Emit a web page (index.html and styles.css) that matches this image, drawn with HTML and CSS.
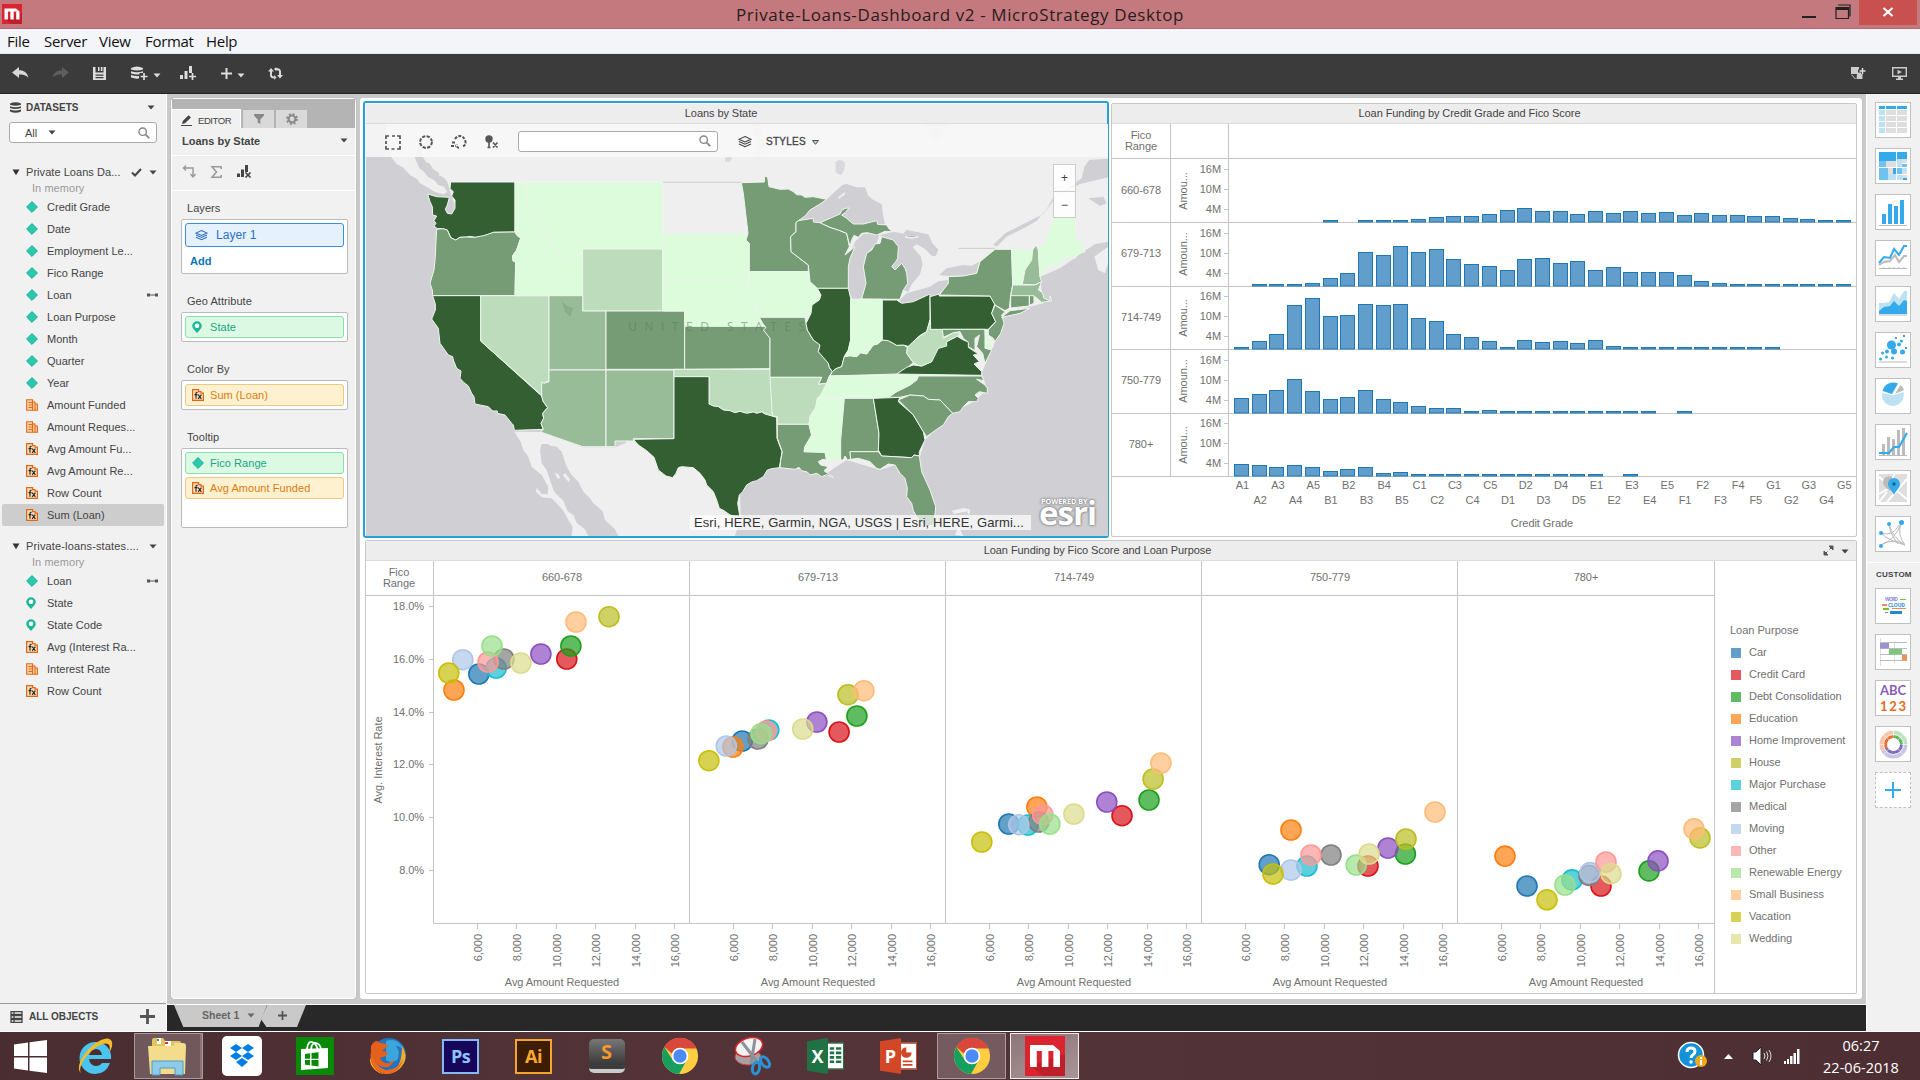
FILE: index.html
```html
<!DOCTYPE html>
<html lang="en">
<head>
<meta charset="utf-8">
<title>Private-Loans-Dashboard v2 - MicroStrategy Desktop</title>
<link rel="stylesheet" href="styles.css">
</head>
<body>
<svg class="defs" width="0" height="0" aria-hidden="true">
  <symbol id="attr" viewBox="0 0 12 12"><path d="M6 .6 11.4 6 6 11.4.6 6z" fill="#2cc8ae" stroke="#14b095"/></symbol>
  <symbol id="metric" viewBox="0 0 12 12"><path d="M.7.7h6.6v2h2.2v2.2h1.9v6.4H.7z" fill="#fcd2a4"/><path d="M.7.7h5.8v10.6H.7zM6.5 3H9v8.3M9 5h2.4v6.3H6.5M2.5 3.5h4M2.5 6h4M2.5 8.5h4" fill="none" stroke="#e0671a" stroke-width="1.1"/></symbol>
  <symbol id="fx" viewBox="0 0 12 12"><path d="M.6.6h6v2h2.4v1.6h2.4v7.2H.6z" fill="#fcdcb4" stroke="#e0671a" stroke-width="1.2"/><path d="M5.6 3.4Q4 3 4 4.6V9.8M2.5 5.6h3M6.2 5.6 9.4 9.8M9.4 5.6 6.2 9.8" fill="none" stroke="#222" stroke-width="1.1"/></symbol>
  <symbol id="geo" viewBox="0 0 12 12"><path d="M5 .3A4.8 4.8 0 0 1 9.8 5C9.8 7.600 7 9.500 5 12 3 9.500.2 7.600.2 5A4.800 4.800 0 0 1 5 .3z" fill="#1cb69c"/><circle cx="5" cy="4.700" r="2.300" fill="#fff"/></symbol>
  <symbol id="caret" viewBox="0 0 8 5"><path d="M.5.5h7L4 4.500z" fill="currentColor"/></symbol>
  <symbol id="fold" viewBox="0 0 8 8"><path d="M0 .5h8L4 7z" fill="#333"/></symbol>
  <symbol id="link" viewBox="0 0 11 4"><path d="M0 .500h3v3H0zM8 .500h3v3H8zM3 1.500h5v1H3z" fill="#555"/></symbol>
  <symbol id="lens" viewBox="0 0 12 12"><circle cx="4.700" cy="4.700" r="3.700" fill="none" stroke="#888" stroke-width="1.400"/><path d="m7.600 7.600 3.600 3.600" stroke="#888" stroke-width="1.900"/></symbol>
  <symbol id="layers" viewBox="0 0 14 12"><path d="M7 .600 13 3.300 7 6 1 3.300zM1 5.500l6 2.700 6-2.700M1 8l6 2.700L13 8" fill="none" stroke="currentColor" stroke-width="1.100"/></symbol>
  <symbol id="mstr" viewBox="0 0 20 20"><path d="M0 0h20v20H0z" fill="#da2430"/><path d="M20 9v11H9L3 15z" fill="#bf1f29"/><path d="M2.500 4.500H14l3.500 3V15.500h-3.300V7.500H11.700v8H8.400v-8H5.900v8H2.500z" fill="#fff"/></symbol>
  <symbol id="chrome" viewBox="0 0 40 40"><circle cx="20" cy="20" r="19" fill="#ffcd40"/><path d="M3.500 10.500A19 19 0 0 1 37.300 12H20a8.500 8.500 0 0 0-8 6z" fill="#d9483b"/><path d="M3.500 10.500A19 19 0 0 0 19 39l7.500-13.500a9 9 0 0 1-14-1z" fill="#17a05d"/><circle cx="20" cy="20" r="8.800" fill="#fff"/><circle cx="20" cy="20" r="7" fill="#4c8bf5"/></symbol>
</svg>

<header class="titlebar">
  <svg class="app-logo" width="20" height="20"><use href="#mstr"/></svg>
  <h1 class="win-title">Private-Loans-Dashboard v2 - MicroStrategy Desktop</h1>
  <div class="win-buttons">
    <svg width="76" height="25" viewBox="0 0 76 25"><path d="M1 16h14v2H1z" fill="#222"/><path d="M35 7.500h12.500v11H35zM35 9.500h12.500M37 5h12v11.500" fill="none" stroke="#222" stroke-width="1.200"/><path d="M35 7.200h12.500v2.200H35z" fill="#222"/></svg>
    <span class="close"><svg width="12" height="10" viewBox="0 0 12 10"><path d="m1.500 1 9 8m0-8-9 8" stroke="#fff" stroke-width="2.200"/></svg></span>
  </div>
</header>
<nav class="menubar"><span class="m-file">File</span><span class="m-server">Server</span><span class="m-view">View</span><span class="m-format">Format</span><span class="m-help">Help</span></nav>

<div class="toolbar">
  <svg class="t-undo" width="17" height="12" viewBox="0 0 17 12"><path d="M0 5.500 7 0v3.200c5 0 8 2 9.500 7.300C13.500 8 11 7.600 7 7.600V11z" fill="#d8d8d8"/></svg>
  <svg class="t-redo" width="17" height="12" viewBox="0 0 17 12"><path d="M17 5.500 10 0v3.200C5 3.200 2 5.200.500 10.500 3.500 8 6 7.600 10 7.600V11z" fill="#5e5e5e"/></svg>
  <svg class="t-save" width="13" height="13" viewBox="0 0 13 13"><path d="M0 0h2.500v5.500h8V0H13v13H0zM5 0h1.500v4H5zM7.800 0H9.500v4H7.800zM2.500 7.500v1.200h8V7.500zm0 2.500v1.200h8V10z" fill="#ddd" fill-rule="evenodd"/></svg>
  <svg class="t-db" width="17" height="14" viewBox="0 0 17 14"><path d="M0 2q6-3 12 0v1.500q-6 2-12 0zM0 5.200q6 2.300 12 0V7H8.500v1.400Q4 8.800 0 7.500zM0 9q4 1.400 8 1v2.500q-4 .5-8-1z" fill="#ddd"/><path d="M13 7v7M9.500 10.500h7" stroke="#ddd" stroke-width="1.700"/></svg>
  <svg class="t-caret" width="8" height="5"><use href="#caret"/></svg>
  <svg class="t-chart" width="17" height="14" viewBox="0 0 17 14"><path d="M0 9h3v4H0zM4.500 5h3v8h-3zM9 0h3v7H9z" fill="#ddd"/><path d="M12.500 7v7M9 10.500h7" stroke="#ddd" stroke-width="1.700"/></svg>
  <svg class="t-plus" width="11" height="11" viewBox="0 0 11 11"><path d="M5.500 0v11M0 5.500h11" stroke="#ddd" stroke-width="2"/></svg>
  <svg class="t-caret" width="8" height="5"><use href="#caret"/></svg>
  <svg class="t-sync" width="15" height="13" viewBox="0 0 15 13"><path d="M3 4v4.500Q3 10.500 6.500 10.500M12 8.500V4.500Q12 2 7.500 2" fill="none" stroke="#ddd" stroke-width="1.900"/><path d="M0 4.600 3 1l3 3.600zM9 8l3 3.600L15 8zM6.200 8v4.800L8.500 10.500zM8.300 0v4.300L6 2z" fill="#ddd"/></svg>
  <svg class="t-note" width="15" height="13" viewBox="0 0 15 13"><path d="M0 0h8v2.500h-1v3h3V7h1.500v5H5.500L6 7H0z" fill="#ccc"/><path d="M1 7.800 5 12H4L0 7.800z" fill="#ccc"/><path d="M11.500 1v6M8.500 4h6" stroke="#ddd" stroke-width="1.500"/></svg>
  <svg class="t-present" width="15" height="13" viewBox="0 0 15 13"><path d="M.700.700h13.600v8.600H.700z" fill="none" stroke="#ccc" stroke-width="1.400"/><path d="M5.500 2.700 10 5 5.500 7.300zM6 10h3v1.500h2V13H4v-1.500h2z" fill="#ccc"/></svg>
</div>

<main class="workspace">
  <aside class="datasets">
    <div class="ds-head"><svg width="11" height="11" viewBox="0 0 11 11"><path d="M0 1.500q5.500-2.500 11 0v1.300q-5.500 2-11 0zM0 4.300q5.500 2 11 0v1.800q-5.500 2-11 0zM0 7.600q5.500 2 11 0v1.800q-5.500 2.500-11 0z" fill="#444"/></svg><b>DATASETS</b><svg class="push" width="8" height="5"><use href="#caret"/></svg></div>
    <div class="ds-search"><span>All</span><svg class="all-caret" width="8" height="5"><use href="#caret"/></svg><svg class="push" width="12" height="12"><use href="#lens"/></svg></div>
    <div class="tree-head"><svg width="8" height="7"><use href="#fold"/></svg><span>Private Loans Da...</span><svg class="check" width="11" height="9" viewBox="0 0 11 9"><path d="m1 4.500 3 3L10 1" fill="none" stroke="#444" stroke-width="2"/></svg><svg width="8" height="5"><use href="#caret"/></svg></div>
    <div class="mem">In memory</div>
    <ul class="tree">
      <li><svg><use href="#attr"/></svg>Credit Grade</li>
      <li><svg><use href="#attr"/></svg>Date</li>
      <li><svg><use href="#attr"/></svg>Employment Le...</li>
      <li><svg><use href="#attr"/></svg>Fico Range</li>
      <li><svg><use href="#attr"/></svg>Loan<svg class="link"><use href="#link"/></svg></li>
      <li><svg><use href="#attr"/></svg>Loan Purpose</li>
      <li><svg><use href="#attr"/></svg>Month</li>
      <li><svg><use href="#attr"/></svg>Quarter</li>
      <li><svg><use href="#attr"/></svg>Year</li>
      <li><svg><use href="#metric"/></svg>Amount Funded</li>
      <li><svg><use href="#metric"/></svg>Amount Reques...</li>
      <li><svg><use href="#fx"/></svg>Avg Amount Fu...</li>
      <li><svg><use href="#fx"/></svg>Avg Amount Re...</li>
      <li><svg><use href="#fx"/></svg>Row Count</li>
      <li class="selected"><svg><use href="#fx"/></svg>Sum (Loan)</li>
    </ul>
    <div class="tree-head second"><svg width="8" height="7"><use href="#fold"/></svg><span>Private-loans-states....</span><svg class="push" width="8" height="5"><use href="#caret"/></svg></div>
    <div class="mem">In memory</div>
    <ul class="tree">
      <li><svg><use href="#attr"/></svg>Loan<svg class="link"><use href="#link"/></svg></li>
      <li><svg><use href="#geo"/></svg>State</li>
      <li><svg><use href="#geo"/></svg>State Code</li>
      <li><svg><use href="#fx"/></svg>Avg (Interest Ra...</li>
      <li><svg><use href="#metric"/></svg>Interest Rate</li>
      <li><svg><use href="#fx"/></svg>Row Count</li>
    </ul>
    <div class="all-objects"><svg width="11" height="12" viewBox="0 0 11 12"><path d="M0 .700h11v2.600H0zM0 4.700h11v2.600H0zM0 8.700h11v2.600H0zM3 .700v10.600" fill="none" stroke="#444" stroke-width="1.300"/></svg><b>ALL OBJECTS</b><svg class="push" width="15" height="15" viewBox="0 0 15 15"><path d="M7.500 0v15M0 7.500h15" stroke="#555" stroke-width="2.800"/></svg></div>
  </aside>

  <section class="center">
    <div class="stage">
      <aside class="editor">
        <div class="tabs">
          <div class="tab on"><svg width="11" height="11" viewBox="0 0 11 11"><path d="M0 10h11v1H0zM1 9l.8-3L7.500.300 10 2.500 4 8.300z" fill="#444"/></svg>EDITOR</div>
          <div class="tab"><svg width="10" height="10" viewBox="0 0 10 10"><path d="M0 0h10v1.500L6.300 5.500V10L3.700 8.500v-3L0 1.500z" fill="#888"/></svg></div>
          <div class="tab"><svg width="12" height="12" viewBox="0 0 12 12"><circle cx="6" cy="6" r="3.400" fill="none" stroke="#888" stroke-width="2"/><circle cx="6" cy="6" r="5" fill="none" stroke="#888" stroke-width="1.800" stroke-dasharray="2 1.930"/></svg></div>
        </div>
        <div class="ed-title"><b>Loans by State</b><svg width="8" height="5"><use href="#caret"/></svg></div>
        <div class="ed-tools">
          <svg width="14" height="13" viewBox="0 0 14 13"><path d="M2 3h9v8M4 .500 1.500 3 4 5.500M8.500 9 11 12l2.500-3" fill="none" stroke="#999" stroke-width="1.400"/></svg>
          <svg width="11" height="12" viewBox="0 0 11 12"><path d="M10.200 3V.700H1L5.500 6 1 11.300h9.200V9" fill="none" stroke="#999" stroke-width="1.500"/></svg>
          <svg width="15" height="13" viewBox="0 0 15 13"><path d="M0 8.500h3V12H0zM4 4.500h3V12H4zM8 0h3v7H8z" fill="#444"/><path d="m8.500 7.500 5 5m0-5-5 5" stroke="#444" stroke-width="1.700"/></svg>
        </div>
        <div class="field f-layers"><h3>Layers</h3><div class="drop"><div class="chip blue"><svg width="13" height="11"><use href="#layers"/></svg>Layer 1</div><b class="add">Add</b></div></div>
        <div class="field"><h3>Geo Attribute</h3><div class="drop"><div class="chip green"><svg width="12" height="12"><use href="#geo"/></svg>State</div></div></div>
        <div class="field"><h3>Color By</h3><div class="drop"><div class="chip orange"><svg width="12" height="12"><use href="#fx"/></svg>Sum (Loan)</div></div></div>
        <div class="field"><h3>Tooltip</h3><div class="drop tall"><div class="chip green"><svg width="12" height="12"><use href="#attr"/></svg>Fico Range</div><div class="chip orange"><svg width="12" height="12"><use href="#fx"/></svg>Avg Amount Funded</div></div></div>
      </aside>

      <div class="dashboard">
        <section class="panel map-panel">
          <h2>Loans by State</h2>
          <div class="map">
            <svg class="map-svg" viewBox="18 102 2226 1236" preserveAspectRatio="none">
              <rect x="18" y="102" width="2226" height="1236" fill="#d0cfd4"/>
              <g fill="#efefef">
                <path d="M75 102 95 203 110 222 128 232 150 255 172 268 180 280 200 290 225 306 250 313 262 306 252 290 235 285 222 270 205 262 190 243 178 235 165 203 190 102z"/>
                <path d="M165 102 190 203 200 218 205 230 222 240 235 255 250 262 262 275 275 320 283 340 400 430 800 1060 1200 1100 1290 1133 1400 1150 1460 1110 1560 1140 1680 1100 1695 1050 1778 970 1840 935 1882 900 1865 850 1905 755 1935 670 2050 640 2040 560 2100 535 2175 482 2205 462 2244 455V102z"/>
                <path d="M463 1025 542 1026 668 1072 765 1072 820 1050 890 1080 960 1100 1140 1200 1142 1282 1125 1338H775L765 1318 735 1290 727 1262 700 1240 690 1225 670 1205 655 1175 635 1155 620 1130 605 1085 590 1070 575 1068 562 1062 545 1062 540 1080 545 1120 560 1140 570 1170 582 1205 610 1232 622 1262 640 1275 650 1298 675 1318 685 1338H635L638 1310 625 1290 610 1262 595 1245 575 1225 545 1222 528 1205 530 1193 545 1212 563 1213 565 1190 545 1155 515 1130 505 1100 490 1080 482 1055z"/>
                <path d="M2203 500 2244 470V520L2235 550 2215 540zM1785 1335 1796 1310 1810 1338zM1775 1262l35-8 20 4v12l-6 4-2-10-40 8zM608 1155l8-5 14 18-4 8zM583 1148l12 4 6 12-8 2z"/>
              </g>
              <g fill="#d0cfd4">
                <path d="M1095 205q12-8 22 0l-8 10h-14zM1427 215q12-10 26 0 6 20-10 40-20-4-16-20zM1180 102h20l15 70-20 30-10-60zM1690 102h75l-25 40-20 15-15-40z" opacity=".7"/>
                <path d="m2165 265 8-35 15-20 56-4v56l-84 20-80 40-20 35-30 35-30 18-60 30-30 30-10-6 35-34 55-28 60-30 45-60 20-12z"/>
                <path d="m2185 325 45-5 10 20-20 8zM190 215l18 5 12 18 18 12-4 12-24-12-16-20z"/>
                <g transform="translate(1110)">
                  <path d="m205 392 35-32 50-32 25-23 22-20 12-3 31 10h25l10 25 15 13 25 12 5 38 5 23-20 12-75 4-35-20-35 10-50 8z"/>
                  <path d="m350 595 5-65 10-50 10-25 25-23 50-4-10 32-30 30-10 40 8 50-13 45-25 5z"/>
                  <path d="m450 435 40-10 30 6 10-12 15 4 50 10 12 26 18 20-8 20-12-2-20-20-25-14-12 8 24 28 6 24-8 30-25 30-10 22-15-5 3-35-18-30-20 20-10-10 18-25 2-35-15-20zM510 630l20-20 70-20 25-16 30-4v10l-27 32-78 28-35 2zM628 555l22-20 50-10 25 2 23-12-8 33-30 8-60 2z"/>
                </g>
              </g>
              <path d="m1435 325 20-16M1635 440q20 6 40 0" stroke="#efefef" stroke-width="6"/>
              <path d="M908 277h236M1795 475l110 0" fill="none" stroke="#ccc" stroke-width="3"/>
              <g class="states">
                <path class="s5" d="M272 276H465V426L400 427 390 432 375 436 362 441 345 442 330 439 320 441 300 442 287 450 272 443 267 430 262 420 248 416 232 416 222 408 228 400 222 392 230 378 218 375 217 350 210 335 203 312 230 320 268 322 262 345 256 358 262 370 275 372 285 355 285 330 275 318 280 305 270 296z"/>
                <path class="s4" d="M230 418 248 416 262 420 272 443 287 450 300 442 320 441 345 442 375 436 400 427 465 426 470 436 482 445 470 480 458 497 459 513 467 516 465 617H218L217 600 210 580 222 540 226 500 228 455z"/>
                <path class="s5" d="M218 617H362V753L545 918 550 935 563 953 548 970 551 985 543 1000 550 1018 463 1021 460 1005 455 1000 435 975 412 970 412 963 398 963 385 950 345 942 342 920 335 910 325 888 312 878 300 865 303 843 290 835 280 810 278 800 265 795 240 760 235 715 215 687 226 660 226 642z"/>
                <path class="s2" d="M362 617H567V875H558L553 880 545 876 547 918 362 753z"/>
                <path class="s1" d="M465 276H498V328L512 358 530 375 545 385 556 398 550 412 557 430 548 440 552 450 570 445 578 465 590 480 597 497 607 507 625 497 640 500 655 497 660 488 668 497V617H465L467 516 459 513 458 497 470 480 482 445 465 426z"/>
                <path class="s1" d="M498 276H908V477H668V497L660 488 655 497 640 500 625 497 607 507 597 497 590 480 578 465 570 445 552 450 548 440 557 430 550 412 556 398 545 385 530 375 512 358 498 328z"/>
                <path class="s2" d="M668 477H908V663H668z"/>
                <path class="s3" d="M567 617H668V663H738V840H567z"/>
                <path class="s4" d="M738 663H974V838H738z"/>
                <path class="s3" d="M567 840H738V1070H668L542 1026 550 1018 543 1000 551 985 548 970 563 953 550 935 545 918V877L553 880 567 875z"/>
                <path class="s3" d="M738 840H942V1046H820V1053H765V1070H738z"/>
                <path class="s1" d="M908 430H1163L1156 447 1168 458V545L1165 570 1170 600 1150 583 1140 577 1115 580 1095 570H908z"/>
                <path class="s1" d="M908 570H1095L1115 580 1140 577 1150 583 1165 595 1185 640 1195 680 1212 709H974V663H908z"/>
                <path class="s4" d="M974 709H1212L1220 714 1216 725 1230 745V836L974 838z"/>
                <path class="s2" d="M942 838H1230L1232 860 1238 980 1215 970 1205 966 1190 970 1180 966 1160 970 1140 964 1125 968 1110 962 1090 960 1075 950 1060 948 1047 942V860H942z"/>
                <path class="s5" d="M942 860H1047V942L1060 948 1075 950 1090 960 1110 962 1125 968 1140 964 1160 970 1180 966 1190 970 1205 966 1215 972 1250 982 1251 1045 1266 1085 1262 1110 1258 1133 1235 1136 1222 1140 1210 1160 1190 1172 1175 1176 1160 1185 1148 1205 1138 1215 1133 1240 1140 1282 1110 1275 1092 1262 1078 1255 1070 1230 1060 1205 1040 1185 1035 1170 1020 1150 1000 1133 965 1130 955 1133 948 1150 938 1163 918 1158 895 1140 882 1102 860 1082 835 1065 820 1048 942 1046z"/>
                <g transform="translate(1110)">
                  <path class="s4" d="M34 278 103 276 104 258 113 262 117 290 150 298 175 297 190 305 200 314 215 315 225 322 250 320 290 328 270 342 240 360 225 378 205 392 198 398V425L182 440 183 485 215 510 235 525V545H58V460L48 450 54 430 47 370 40 310z"/>
                  <path class="s1" d="M58 545H235L240 575 262 595 273 615 268 630 246 645 246 660 243 670 225 682H88L75 640 52 597 60 570z"/>
                  <path class="s4" d="M88 682H225L228 700 232 720 250 750 262 755 270 765 265 785 282 802 295 820 298 832 307 845 298 860 290 880 265 883 275 862H120V745L100 720 108 713 98 700z"/>
                  <path class="s2" d="M120 862H275L265 883 290 880 280 905 272 925 260 935 262 948 250 962 240 980 237 1003H142V980L127 978z"/>
                  <path class="s4" d="M142 1003H237L245 1035 225 1070 222 1085 285 1087 290 1110 278 1108 265 1115 272 1125 295 1130 282 1142 310 1162 290 1154 275 1160 260 1150 240 1155 232 1146 215 1142 207 1132 195 1138 150 1133 152 1112 157 1085 142 1045z"/>
                  <path class="s4" d="M205 392 250 385 250 396 270 398 300 412 325 420 350 430 355 455 358 470 345 495 375 470 360 505 355 530V595H262L240 575 235 525 183 485 182 440 198 425V398z"/>
                  <path class="s4" d="M270 398 300 385 330 372 335 362 345 355 358 354 345 368 335 375 350 385 370 402 400 402 440 392 443 403 470 405 478 418 490 425 465 424 440 435 412 428 395 430 385 442 372 436 365 450 360 470 350 430 325 420 300 412z"/>
                  <path class="s4" d="M455 440 490 450 505 470 503 505 497 515 485 530 495 540 515 520 525 535 530 550 533 580 520 600 510 628 395 627 408 580 400 530 410 490 425 480 435 462 450 460z"/>
                  <path class="s5" d="M262 595H355L362 625V750L355 780 343 800 335 830 318 836 307 845 298 832 295 820 265 785 270 765 250 750 232 720 228 700 243 670 246 645 268 630 273 615z"/>
                  <path class="s4" d="M307 845 318 836 335 830 343 800 360 797 380 800 392 788 410 792 430 765 442 762 457 750 475 752 490 760 500 766 520 765 532 772 530 790 550 818 525 838 500 852 300 858z"/>
                  <path class="s1" d="M362 628H457V750L442 762 430 765 410 792 392 788 380 800 360 797 343 800 355 780 362 750z"/>
                  <path class="s5" d="M457 630H500L515 640 550 635 600 612V690L590 725 572 735 560 745 545 772 520 765 500 766 490 760 475 752 457 750z"/>
                  <path class="s4" d="M475 922 500 905 540 885 560 870 565 858H755L762 872 740 868 765 885 772 895 772 910 748 905 735 915 745 925 740 935 715 935 700 950 690 965 668 970 630 930 595 928 580 918 540 915 510 922z"/>
                  <path class="s1" d="M298 858 565 855 560 870 540 885 500 905 475 922 262 925 272 915 290 880z"/>
                  <path class="s1" d="M262 925H343L332 1050V1110L312 1108 290 1112 285 1087 222 1085 225 1070 245 1035 237 1003 240 980 255 960z"/>
                  <path class="s4" d="M343 925H430L447 1030 445 1085H360L362 1108 352 1110 345 1098 340 1110 332 1110V1050z"/>
                  <path class="s5" d="M430 925 510 922 505 935 550 975 580 1025 585 1050 568 1085V1098L552 1095 545 1103 455 1098 445 1080 447 1030z"/>
                  <path class="s4" d="M360 1085H445L455 1098 545 1103 552 1095 568 1098 575 1145 600 1200 617 1250 612 1305 590 1310 575 1300 560 1280 550 1262 545 1240 530 1220 532 1195 525 1165 510 1150 495 1125 475 1122 450 1138 440 1135 420 1115 385 1105 362 1108z"/>
                  <path class="s4" d="M505 930 540 915 580 918 595 928 630 930 668 970 655 980 640 1005 620 1018 590 1040 580 1025 550 975z"/>
                  <path class="s5" d="M500 852 530 832 550 825 575 828 605 815 612 790 625 775 650 755 680 738 700 750 718 757 715 772 745 792 730 795 748 815 732 822 755 845V856z"/>
                  <path class="s2" d="M532 772 560 745 590 725 600 690 602 718H637L640 745 670 728 695 730 680 740 650 755 650 768 625 775 605 815 575 828 565 826 550 818 530 790z"/>
                  <path class="s5" d="M600 620 628 612V618H780L795 640 785 670 797 695 775 718H602z"/>
                  <path class="s4" d="M637 718H765V775L785 780 765 820 758 790 740 770 748 735 735 745 735 782 715 770 715 757 700 745 690 725 670 728 640 742z"/>
                  <path class="s1" d="M765 718 775 740 790 770 768 775z"/>
                  <path class="s4" d="M795 645 825 665 815 675 822 700 812 730 795 755 790 745 775 735 775 720 797 695 785 670z"/>
                  <path class="s4" d="M628 615 655 580V560L700 558 740 550 750 515 795 478H845L848 585 842 615 838 655 825 662 795 645 780 618zM815 682 840 662 900 655 870 670z"/>
                  <path class="s1" d="M845 478H908L905 510 885 540 877 583H848z"/>
                  <path class="s3" d="M908 480 918 465 925 480 930 560 935 575 915 585 877 583 885 540 905 510z"/>
                  <path class="s3" d="M848 585H915L935 575 925 600 937 608 942 625 960 632 960 618 965 633 935 637 915 620H842z"/>
                  <path class="s4" d="M842 617H898V648L842 654zM898 617H912V640L898 646z"/>
                  <path class="s1" d="M925 480 935 465 945 460 970 385 975 375H1035L1038 440 1050 455 1065 485 1045 492 1035 505 1015 500 990 515 988 530 965 525 945 540 930 560z"/>
                </g>
              </g>
              <path d="M605 635 625 650 640 655 630 680 615 665z" fill="#7fa57f" opacity=".6"/>
              <text class="country" x="805" y="724" textLength="530">UNITED STATES</text>
            </svg>
            <div class="map-tools">
              <svg class="sel-rect" width="16" height="15" viewBox="0 0 16 15"><path d="M1 4V1h3M7 1h3M12 1h3v3M15 6v3M15 11v3h-3M9.500 14h-3M4 14H1v-3M1 9V6" fill="none" stroke="#555" stroke-width="1.700"/></svg>
              <svg class="sel-circ" width="14" height="14" viewBox="0 0 14 14"><circle cx="7" cy="7" r="5.900" fill="none" stroke="#555" stroke-width="2" stroke-dasharray="3.200 1.430"/></svg>
              <svg class="sel-free" width="16" height="14" viewBox="0 0 16 14"><path d="M4 4Q6 1 9 1t5 4q2 5-3 7M8 13Q6 13 5.500 9.500M0 11h5M1 7.500h3" fill="none" stroke="#555" stroke-width="2" stroke-dasharray="3 1.300"/></svg>
              <svg class="sel-pin" width="14" height="14" viewBox="0 0 14 14"><circle cx="4" cy="4" r="3.700" fill="#555"/><path d="M4 7v6M2.500 12.500h3M8 7.500l4.500 5m0-5-4.500 5" stroke="#555" stroke-width="1.600"/></svg>
              <div class="map-search"><svg width="12" height="12"><use href="#lens"/></svg></div>
              <svg class="m-layers" width="14" height="12"><use href="#layers"/></svg>
              <span class="styles">STYLES</span>
              <svg class="s-caret" width="7" height="5" viewBox="0 0 7 5"><path d="M.600.600h5.800L3.500 4.300z" fill="#ddd" stroke="#444"/></svg>
            </div>
            <div class="zoom"><span>+</span><span>−</span></div>
            <div class="attribution">Esri, HERE, Garmin, NGA, USGS | Esri, HERE, Garmi...</div>
            <div class="esri"><small>POWERED BY</small><strong>esri</strong></div>
          </div>
        </section>
        <section class="panel bar-panel">
          <h2>Loan Funding by Credit Grade and Fico Score</h2>
          <svg id="bars" width="744" height="411" viewBox="1112 124 744 411"></svg>
        </section>
        <section class="panel scatter-panel">
          <h2><span>Loan Funding by Fico Score and Loan Purpose</span><svg class="expand" width="9" height="9" viewBox="0 0 9 9"><path d="M5 0h4v4zM0 5v4h4zM5.500 3.500 8 1M1 8l2.500-2.500" fill="#555" stroke="#555"/></svg><svg width="8" height="5"><use href="#caret"/></svg></h2>
          <div class="scatter-body">
            <svg id="scatter" width="1348" height="432" viewBox="366 561 1348 432"></svg>
            <div class="legend"><h4>Loan Purpose</h4><ul id="legend"></ul></div>
          </div>
        </section>
      </div>
    </div>
    <div class="sheets">
      <div class="sheet"><span>Sheet 1</span><svg width="8" height="5"><use href="#caret"/></svg></div>
      <div class="sheet add-sheet"><svg width="9" height="9" viewBox="0 0 9 9"><path d="M4.500 0v9M0 4.500h9" stroke="#555" stroke-width="1.800"/></svg></div>
    </div>
  </section>

  <aside class="gallery">
    <div class="viz"><svg viewBox="0 0 28 28"><path d="M0 0h6v3H0zM7 0h10v3H7zM18 0h10v3H18z" fill="#34aaeb"/><path d="M0 4h6v5H0zM0 10h6v5H0zM0 16h6v5H0zM0 22h6v5H0z" fill="#bce0f4"/><path d="M7 4h10v5H7zM7 10h10v5H7zM7 16h10v5H7zM7 22h10v5H7zM18 4h10v5H18zM18 10h10v5H18zM18 16h10v5H18zM18 22h10v5H18z" fill="#dedede"/></svg></div>
    <div class="viz"><svg viewBox="0 0 28 28"><path d="M0 0h17v9H0zM18 0h10v7H18zM14 16h3v6h-3zM24 26h4v2h-4z" fill="#34aaeb"/><path d="M0 9h7v6H0zM0 16h9v12H0zM18 16h5v6h-5zM23 12h5v3h-5z" fill="#6fc1ee"/><path d="M18 7h5v8h-5zM9 22h8v6H9zM18 23h6v5h-6zM23 16h5v3h-5z" fill="#bce0f4"/><path d="M7 9h10v6H7zM9 16h5v6H9zM23 7h5v4h-5zM23 19h5v3h-5zM24 23h4v3h-4z" fill="#dedede"/></svg></div>
    <div class="viz"><svg viewBox="0 0 28 28"><path d="M3 16h4v10H3zM9 6h4v20H9zM15 8h4v18h-4zM21 2h4v24h-4z" fill="#34aaeb"/><path d="M0 27.500h28" stroke="#bbb"/></svg></div>
    <div class="viz"><svg viewBox="0 0 28 28"><path d="M0 21 5 18l6-1 5-6 4 7 5-6h3" fill="none" stroke="#bbb" stroke-width="2"/><path d="M0 19 5 13l6 1 4-9 5 6 5-9h3" fill="none" stroke="#34aaeb" stroke-width="2"/><path d="M0 24.500h28M5 23v2M10 23v2M15 23v2M20 23v2M25 23v2" stroke="#bbb"/></svg></div>
    <div class="viz"><svg viewBox="0 0 28 28"><path d="M0 13h5l5-1 5-9 5 6 5-8h3v23H0z" fill="#bce0f4"/><path d="M0 21 5 17l6-1 4-5 5 5 5-6 3 1v13H0z" fill="#34aaeb"/><path d="M0 25h28" stroke="#bbb"/></svg></div>
    <div class="viz"><svg viewBox="0 0 28 28"><g fill="#34aaeb"><circle cx="12.500" cy="9" r="4.600"/><circle cx="15" cy="15.500" r="3"/><circle cx="23.500" cy="16" r="2.500"/><circle cx="20" cy="8.500" r="2"/><circle cx="8" cy="15.500" r="2"/><circle cx="22.500" cy="5" r="1.500"/><circle cx="3.500" cy="17" r="1.500"/><circle cx="1.500" cy="23" r="1.500"/><circle cx="7.500" cy="21" r="1.500"/><circle cx="13.500" cy="22" r="1.500"/><path d="M16 1h2v2h-2zM24-1h2v2h-2zM26 11h2v2h-2z"/></g><path d="M0 26h28" stroke="#bbb"/></svg></div>
    <div class="viz"><svg viewBox="0 0 28 28"><path d="M14 13.500 3 11A11 11 0 1 0 24.500 10z" fill="#bce0f4"/><path d="M13 12 3.500 9A11 11 0 0 1 19 1.500z" fill="#34aaeb"/><path d="M16 12 21.500 3a8 8 0 0 1 3.500 5z" fill="#bbb"/></svg></div>
    <div class="viz"><svg viewBox="0 0 28 28"><path d="M3 16h3v11H3zM8 9h3v18H8zM13 11h3v16h-3zM18 2h3v25h-3zM23 0h3v27h-3z" fill="#bbb"/><path d="M0 25h10l5-6h5l8-14" fill="none" stroke="#34aaeb" stroke-width="2.200"/><path d="M0 27.500h28" stroke="#bbb"/></svg></div>
    <div class="viz"><svg viewBox="0 0 28 28"><path d="M0 0h28v28H0z" fill="#dedede"/><path d="M0 3 28 25M8 28 28 5M0 20l14-8M16 0l-8 12M0 28 8 18" stroke="#fff" stroke-width="2"/><path d="M13 3a6 6 0 0 0-9 5c0 4 5 8 8 9z" fill="#bbb"/><path d="M15 4a6 6 0 0 1 6 6c0 4-4 6-6 11-2-5-6-7-6-11a6 6 0 0 1 6-6z" fill="#34aaeb"/><circle cx="15" cy="10" r="1.700" fill="#16608d"/></svg></div>
    <div class="viz"><svg viewBox="0 0 28 28"><path d="M2 25Q18 18 22 3M10 4q0 8 9 20M2 13q12 4 18-8M2 13q8 8 24 12M2 25q14-8 24 0M22 3q-4 12 4 22M10 4q4 14 16 21" fill="none" stroke="#bbb"/><g fill="#34aaeb"><circle cx="10" cy="4" r="2"/><circle cx="22.500" cy="2.500" r="2.500"/><circle cx="2" cy="13" r="2"/><circle cx="2" cy="26" r="2"/></g></svg></div>
    <div class="custom-label">CUSTOM</div>
    <div class="viz"><svg viewBox="0 0 28 28"><text x="6" y="9" class="wc" fill="#8f86dc" textLength="13">WORD</text><text x="9" y="14.500" class="wc" fill="#1e92d8" textLength="17">CLOUD</text><path d="M21 7h6v1h-6zM4 16h6v2H4z" fill="#7cc030"/><path d="M3 12h5v2H3zM13 16h14v1H13z" fill="#f28a50"/><path d="M11 19h12v3H11z" fill="#1e8ad0"/><path d="M6 20h3v1H6z" fill="#8f86dc"/></svg></div>
    <div class="viz"><svg viewBox="0 0 28 28"><path d="M1.500 0v28M15.500 3v22" stroke="#ddd"/><path d="M1 4.500h27M1 10.500h27M1 16.500h27M1 22.500h27" stroke="#bbb"/><path d="M1 5h9v5.500H1z" fill="#9b92cf"/><path d="M10 11h13v5.500H10z" fill="#80c480"/><path d="M23 17h5v5.500h-5z" fill="#ef8e58"/></svg></div>
    <div class="viz"><svg viewBox="0 0 28 28"><text x="1" y="11" class="abc" fill="#8a5cc0" textLength="26">ABC</text><text x="1" y="27" class="abc" fill="#e66a1f" textLength="26">123</text></svg></div>
    <div class="viz"><svg viewBox="0 0 28 28"><g fill="none" stroke-width="3"><circle cx="14.500" cy="14.500" r="8" stroke="#63b85f" pathLength="100" stroke-dasharray="25 75" stroke-dashoffset="25"/><circle cx="14.500" cy="14.500" r="8" stroke="#7d6fc0" pathLength="100" stroke-dasharray="42 58"/><circle cx="14.500" cy="14.500" r="8" stroke="#ed6f30" pathLength="100" stroke-dasharray="33 67" stroke-dashoffset="-42"/></g><g fill="none" stroke-width="5" opacity=".4"><circle cx="14.500" cy="14.500" r="11.500" stroke="#63b85f" pathLength="100" stroke-dasharray="25 75" stroke-dashoffset="25"/><circle cx="14.500" cy="14.500" r="11.500" stroke="#7d6fc0" pathLength="100" stroke-dasharray="42 58"/><circle cx="14.500" cy="14.500" r="11.500" stroke="#ed6f30" pathLength="100" stroke-dasharray="33 67" stroke-dashoffset="-42"/></g><path d="m3 3 23 23M26 3 3 26M14.500 0v6M0 14.500h6M29 14.500h-6" stroke="#fff" opacity=".7" stroke-width=".7"/><circle cx="14.500" cy="14.500" r="10" fill="none" stroke="#fff" stroke-width=".7"/><circle cx="14.500" cy="14.500" r="6" fill="#fff"/></svg></div>
    <div class="viz dashed"><svg viewBox="0 0 28 28"><path d="M14 6v16M6 14h16" stroke="#34aaeb" stroke-width="2"/></svg></div>
  </aside>
</main>

<footer class="taskbar">
  <div class="task start"><svg width="33" height="33" viewBox="0 0 33 33"><path d="m0 4.500 14-2V16H0zM15.500 2.200 33 0v16H15.500zM0 17.500h14v13l-14-2zM15.500 17.500H33V33l-17.500-2.300z" fill="#fff"/></svg></div>
  <div class="task ie"><svg width="38" height="38" viewBox="0 0 38 38"><path d="M20 5a15 15 0 0 1 15 17H13q1 7 7 7 4 0 6-3h8q-4 11-15 11A15 15 0 0 1 20 5zm-7 13h13q-1-6-6-6t-7 6z" fill="#4cc4f0"/><path d="M5 36C-2 30 10 10 25 3q9-4 11 2 1 5-3 11 2-7-1-9-4-2-13 4C7 20 2 32 5 36z" fill="#f5bd2b"/></svg></div>
  <div class="task open stacked"><svg width="40" height="40" viewBox="0 0 40 40"><path d="M5 4q0-2 2-2h9l2 3h14q2 0 2 2v20H5z" fill="#e3c461"/><path d="M10 2h4v6h-4zM18 5h6v5h-6z" fill="#fff"/><path d="M10 3h2v2h-2z" fill="#2c9c48"/><path d="M18 6h3v2h-3z" fill="#d8362c"/><path d="M1 10h25l2-3h8q3 0 3 3l-1 28H3z" fill="#f3dd8c"/><path d="M5 25h31v14h-8v-7H13v7H5z" fill="#8fcbe8" stroke="#4a9cc8"/></svg></div>
  <div class="task"><svg width="40" height="40" viewBox="0 0 40 40"><rect width="40" height="40" rx="5" fill="#fff"/><path d="m14 8 6 4-6 4-6-4zM26 8l6 4-6 4-6-4zM14 16l6 4-6 4-6-4zM26 16l6 4-6 4-6-4zM14 26l6-4 6 4-6 5z" fill="#007ee5"/></svg></div>
  <div class="task"><svg width="38" height="38" viewBox="0 0 38 38"><path d="M0 0h38v38H0z" fill="#088a08"/><path d="M11 12q1-8 5-7t6 8M15 12q1-7 5-6t5 6" fill="none" stroke="#fff" stroke-width="1.800"/><path d="m5 12 27-1v20l-27 2z" fill="#fff"/><path d="m9 17 5-.8v5.500H9zM15.500 16l7-.8v6.500h-7zM9 23h5v5.300l-5-.6zM15.500 23h7v6.500l-7-1z" fill="#088a08"/></svg></div>
  <div class="task"><svg width="38" height="38" viewBox="0 0 38 38"><circle cx="20" cy="18" r="17" fill="#2473bc"/><path d="M17 4q12-4 18 9-4-4-8-4 5 7 1 14-6 4-11 0z" fill="#3ba6dc"/><path d="M2 9Q7 1 11 6q6 0 8 3l-6 5 6 1-2 4-6 2q2 6 9 5l5-3q-3 10-14 6Q1 25 2 9z" fill="#e5601c"/><path d="M33 9q6 9 2 17-6 11-18 11Q5 36 1 20q-1 8 5 13 7 6 15 3 12-4 12-27z" fill="#f9ac26"/><path d="M2 14Q-1 32 16 37q14 1 18-15-6 12-18 11Q4 28 2 14z" fill="#ed6a1d"/></svg></div>
  <div class="task"><div class="adobe ps">Ps</div></div>
  <div class="task"><div class="adobe ai">Ai</div></div>
  <div class="task"><div class="sublime">S</div></div>
  <div class="task"><svg width="38" height="38"><use href="#chrome"/></svg></div>
  <div class="task"><svg width="38" height="38" viewBox="0 0 38 38"><ellipse cx="14" cy="20" rx="13" ry="8" fill="#a8a0a3" stroke="#c44"/><ellipse cx="15" cy="10" rx="14" ry="9" fill="#f4f4f6" stroke="#d22" stroke-width="1.500" transform="rotate(-18 15 10)"/><path d="m8 5 16 21M21 2l-4 25" stroke="#8c9299" stroke-width="3"/><g fill="none" stroke="#2b92d6" stroke-width="3"><ellipse cx="22" cy="31" rx="3.500" ry="6" transform="rotate(12 22 31)"/><ellipse cx="31" cy="25" rx="3.500" ry="6" transform="rotate(-38 31 25)"/></g></svg></div>
  <div class="task"><div class="office excel"><b>X</b><svg width="17" height="28" viewBox="0 0 17 28"><path d="M0 0h17v28H0z" fill="#fff"/><path d="M2 4h5v3H2zM9 4h6v3H9zM2 9h5v3H2zM9 9h6v3H9zM2 14h5v3H2zM9 14h6v3H9zM2 19h5v3H2zM9 19h6v3H9z" fill="#207245"/></svg></div></div>
  <div class="task"><div class="office ppt"><b>P</b><svg width="17" height="28" viewBox="0 0 17 28"><path d="M0 0h17v28H0z" fill="#fff"/><circle cx="6" cy="10" r="6" fill="#d24726"/><path d="M6 10V3h7v7z" fill="#fff"/><path d="M2 19h11v2H2zM2 23h11v2H2z" fill="#d24726"/></svg></div></div>
  <div class="task open"><svg width="38" height="38"><use href="#chrome"/></svg></div>
  <div class="task open active"><svg width="40" height="40"><use href="#mstr"/></svg></div>
  <div class="tray">
    <svg width="30" height="28" viewBox="0 0 30 28"><circle cx="13" cy="13" r="12.500" fill="#1292d8" stroke="#fff" stroke-width="1.500"/><path d="M9 10q0-4 4-4t4 3.500q0 2-2 3.200T13 16" fill="none" stroke="#fff" stroke-width="3"/><circle cx="13" cy="20" r="1.700" fill="#fff"/><circle cx="23" cy="19" r="6" fill="#efa91c"/><path d="M22 18h2v5h-2zM22 15h2v2h-2z" fill="#fff"/></svg>
    <svg class="up" width="9" height="5" viewBox="0 0 9 5"><path d="m0 5 4.500-5L9 5z" fill="#fff"/></svg>
    <svg class="vol" width="20" height="20" viewBox="0 0 20 20"><path d="M1 6h3l5-5v18l-5-5H1z" fill="#fff" stroke="#222"/><path d="M12 7q2 3 0 6M14.500 5.500q3 4.500 0 9M17 4q4 6 0 12" fill="none" stroke="#ddd"/></svg>
    <svg class="sig" width="16" height="16" viewBox="0 0 16 16"><path d="M0 13h2v3H0zM3 11h2v5H3zM6 8h2.500v8H6zM9.500 5H12v11H9.500zM13 1h2.500v15H13z" fill="#fff"/></svg>
    <div class="clock"><span>06:27</span><span>22-06-2018</span></div>
  </div>
</footer>
<script src="charts.js"></script>
</body>
</html>
```
FILE: styles.css
```css
* { box-sizing: border-box; }
body { margin: 0; width: 1920px; height: 1080px; overflow: hidden; display: flex; flex-direction: column; font: 11px "Liberation Sans", Arial, sans-serif; color: #444; background: #f1f1f1; }
h1, h2, h3, h4, ul { margin: 0; padding: 0; font: inherit; list-style: none; }
svg { flex: none; display: block; overflow: visible; }
.defs { position: absolute; }
.push { margin-left: auto; }

.titlebar { height: 29px; flex: none; background: #c3797d; border-bottom: 1px solid #b0696e; display: grid; grid-template-columns: 200px 1fr 200px; align-items: start; }
.app-logo { margin: 4px 0 0 2px; }
.win-title { text-align: center; font: 17px/30px "Open Sans", "Noto Sans", sans-serif; color: #2a1c1d; letter-spacing: .61px; }
.win-buttons { display: flex; justify-content: flex-end; padding-right: 3px; }
.win-buttons > svg { margin-right: -18px; }
.close { width: 58px; height: 25px; background: #c8504f; display: flex; align-items: center; justify-content: center; padding-bottom: 2px; }

.menubar { height: 25px; flex: none; background: #f4f5f8; border-bottom: 1px solid #dfe2e8; display: flex; padding-left: 7px; font: 15px/24px "Open Sans", "Noto Sans", sans-serif; letter-spacing: -.3px; color: #111; }
.m-file { width: 37px; }
.m-server { width: 55px; }
.m-view { width: 46px; }
.m-format { width: 61px; }

.toolbar { height: 40px; flex: none; background: #3b3b3b; border-bottom: 1px solid #222; display: flex; align-items: center; padding: 0 13px 1px 12px; color: #ddd; }
.t-redo { margin-left: 23px; }
.t-save { margin-left: 24px; }
.t-db { margin-left: 25px; }
.t-caret { margin: 4px 0 0 5px; }
.t-chart { margin-left: 19px; }
.t-plus { margin-left: 24px; }
.t-sync { margin-left: 23px; }
.t-note { margin-left: auto; }
.t-present { margin-left: 26px; }

.workspace { flex: 1; display: flex; min-height: 0; }
.datasets { width: 167px; background: #f1f1f1; border-right: 1px solid #fff; display: flex; flex-direction: column; border-bottom: 1px solid #fff; }
.ds-head { display: flex; align-items: center; height: 14px; margin: 6px 11px 0 10px; font-size: 10px; }
.ds-head b { margin-left: 5px; }
.ds-search { width: 148px; height: 21px; margin: 8px 0 0 9px; padding: 0 6px 0 15px; background: #fff; border: 1px solid #aaa; border-radius: 3px; display: flex; align-items: center; }
.all-caret { margin-left: 11px; }
.tree-head { display: flex; align-items: center; height: 14px; margin: 22px 9px 0 12px; letter-spacing: .05px; }
.tree-head span { margin-left: 6px; white-space: nowrap; }
.tree-head .check { margin: 0 7px 0 auto; }
.tree-head.second { margin-top: 13px; letter-spacing: .15px; }
.mem { padding-left: 32px; margin-top: 2px; height: 15px; line-height: 15px; color: #999; letter-spacing: .05px; }
.tree li { display: flex; align-items: center; height: 22px; margin: 0 2px; padding-left: 24px; border-radius: 2px; letter-spacing: .02px; padding-right: 6px; }
.tree li > svg { width: 12px; height: 12px; margin-right: 9px; }
.tree li > svg.link { width: 11px; height: 4px; margin: 0 0 0 auto; }
.tree .selected { background: #cdcdcd; }
.all-objects { margin-top: auto; height: 28px; border-top: 1px solid #999; display: flex; align-items: center; padding: 0 11px 2px; font-size: 10px; }
.all-objects b { margin-left: 7px; }

.center { width: 1699px; display: flex; flex-direction: column; }
.stage { height: 911px; background: #c9c9c9; border-bottom: 1px solid #fff; display: flex; padding: 4px 4px 5px 4px; gap: 4px; }
.editor { width: 185px; background: #f1f1f1; border: 1px solid #fff; border-radius: 3px; box-shadow: 0 0 1px #888; }
.tabs { height: 29px; background: #b4b4b4; display: flex; align-items: flex-end; gap: 2px; padding-right: 48px; }
.tab { flex: 1; height: 18px; background: #d9d9d9; display: flex; align-items: center; justify-content: center; }
.tab.on { flex: 0 0 69px; background: #f1f1f1; border: solid #fff; border-width: 1px 1px 0 0; justify-content: flex-start; gap: 6px; padding: 2px 0 0 9px; font-size: 9.6px; letter-spacing: -.5px; height: 19px; }
.ed-title { height: 28px; border-bottom: 1px solid #fff; display: flex; align-items: center; justify-content: space-between; padding: 0 7px 2px 10px; letter-spacing: 0; }
.ed-tools { height: 35px; border-bottom: 1px solid #fff; display: flex; align-items: center; gap: 15px; padding: 0 10px 3px; }
.ed-tools svg:nth-child(3) { margin-left: 0; }
.field { margin: 0 7px 0 9px; padding-top: 20px; }
.field h3 { padding-left: 6px; height: 18px; line-height: 14px; letter-spacing: .05px; }
.f-layers { padding-top: 10px; }
.f-layers .drop { height: 55px; }
.drop { background: #fff; border: 1px solid #bbb; border-radius: 2px; padding: 3px; display: flex; flex-direction: column; gap: 3px; }
.drop.tall { height: 80px; }
.chip { height: 22px; flex: none; border-radius: 3px; border: 1px solid; display: flex; align-items: center; gap: 6px; padding-left: 6px; letter-spacing: .05px; }
.blue { height: 24px; color: #2b6fc8; background: #e6f1fe; border-color: #3d8ee0; font-size: 12px; padding-left: 9px; gap: 8px; }
.green { background: #dcf9e3; border-color: #8adfae; color: #18a584; }
.orange { background: #fdf1cf; border-color: #ecc983; color: #dd7c12; }
.add { color: #0a74ba; padding: 5px 0 0 5px; line-height: 13px; }

.dashboard { width: 1502px; background: #fff; border-radius: 3px; padding: 3px 5px 0 3px; display: grid; grid-template: 437px 456px / 746px 748px; align-content: start; }
.panel { border: 1px solid #c8c8c8; border-radius: 2px; background: #fff; }
.panel h2 { height: 20px; line-height: 18px; background: #ededed; border-bottom: 1px solid #dcdcdc; text-align: center; letter-spacing: -.07px; }
.map-panel { border: 2px solid #25a2d3; border-radius: 3px; padding: 1px 0 0 1px; }
.map { position: relative; height: 412px; overflow: hidden; width: 742px; }
.map-panel h2 { width: 741px; padding-right: 31px; }
.map-svg { width: 742px; height: 412px; }
.states path { stroke: #eef5ee; stroke-width: 3; stroke-linejoin: round; }
.s1 { fill: #dcfcdc; }
.s2 { fill: #bcdcbc; }
.s3 { fill: #98bc98; }
.s4 { fill: #759c75; }
.s5 { fill: #335f33; }
.country { font: 36px "Open Sans", "Noto Sans", sans-serif; fill: #5e7c5e; opacity: .55; }
.map-tools { position: absolute; inset: 0 0 auto; height: 33px; background: rgba(248, 248, 248, .88); display: flex; align-items: center; padding: 3px 0 0 19px; }
.sel-circ { margin-left: 18px; }
.sel-free { margin-left: 18px; }
.sel-pin { margin-left: 18px; }
.map-search { width: 200px; height: 21px; margin: -2px 0 0 19px; background: #fff; border: 1px solid #aaa; border-radius: 3px; display: flex; align-items: center; justify-content: flex-end; padding-right: 6px; }
.m-layers { margin-left: 20px; color: #444; }
.styles { margin-left: 14px; font-size: 10px; letter-spacing: .25px; color: #444; -webkit-text-stroke: .3px #444; line-height: 12px; }
.s-caret { margin-left: 6px; }
.zoom { position: absolute; left: 687px; top: 40px; width: 23px; height: 54px; background: rgba(255, 255, 255, .85); border: 1px solid #ccc; }
.zoom span { display: flex; height: 26px; align-items: center; justify-content: center; font-size: 12px; color: #444; }
.zoom span + span { border-top: 1px solid #ccc; }
.attribution { position: absolute; left: 324px; top: 391px; height: 15px; width: 341px; padding-left: 4px; background: rgba(255, 255, 255, .7); font-size: 13px; line-height: 15px; letter-spacing: .1px; color: #333; white-space: nowrap; }
.esri { position: absolute; left: 673px; top: 373px; width: 60px; color: #fff; text-shadow: 0 0 3px #777, 0 0 2px #777; display: flex; flex-direction: column; }
.esri small { font: bold 7.2px/8px "Open Sans", sans-serif; padding-left: 2px; white-space: nowrap; }
.esri strong { font: bold 33px/25px "Open Sans", sans-serif; margin-top: -5px; letter-spacing: -1px; }

.bar-panel { margin: 2px 0 0 2px; width: 746px; height: 434px; }
.bar-panel h2 { padding-right: 29px; }
.chart-label { font: 11px "Liberation Sans", Arial, sans-serif; fill: #707070; letter-spacing: -.05px; }
.grid-line { stroke: #c4c4c4; stroke-width: 1; fill: none; }
.bar { fill: #619ecb; stroke: #1f77b4; stroke-width: 1; }

.scatter-panel { grid-column: 1 / 3; margin: 2px 0 0 2px; width: 1492px; height: 454px; }
.scatter-panel h2 { display: flex; align-items: center; padding: 0 7px 1px 0; }
.scatter-panel h2 span { margin: 0 auto; padding-left: 5px; }
.scatter-panel .expand { margin-right: 8px; }
.scatter-panel h2 > svg:last-child { margin-top: 3px; }
.scatter-body { display: flex; }
.legend { padding: 61px 0 0 15px; color: #707070; border-left: 1px solid #c4c4c4; }
.legend h4 { line-height: 16px; height: 16px; margin-bottom: 3px; }
.legend li { height: 22px; display: flex; align-items: center; gap: 8px; padding-left: 1px; white-space: nowrap; letter-spacing: -.02px; }
.swatch { width: 10px; height: 10px; margin-top: 2px; opacity: .7; }

.sheets { background: #282828; display: flex; padding-left: 7px; border-bottom: 1px solid #fff; flex: 1; align-items: flex-start; }
.sheet { width: 93px; height: 22px; background: #c9c9c9; clip-path: polygon(0 0, 100% 0, 91% 100%, 10% 100%); display: flex; align-items: center; gap: 8px; padding: 0 0 2px 28px; font-weight: bold; color: #666; white-space: nowrap; font-size: 10.500px; }
.add-sheet { width: 45px; margin-left: -6px; padding-left: 17px; clip-path: polygon(14% 0, 100% 0, 80% 100%, 12% 100%, 0 65%); }

.gallery { width: 54px; background: #f1f1f1; border-left: 1px solid #fff; border-bottom: 1px solid #fff; padding: 8px 0 0 8px; }
.viz { width: 36px; height: 36px; background: #fff; border: 1px solid #c0c0c0; margin-bottom: 10px; padding: 3px; }
.viz svg { width: 28px; height: 28px; }
.dashed { border-style: dashed; }
.custom-label { margin: 1px 0 8px -8px; padding: 7px 0 0 9px; height: 18px; border-top: 1px solid #fff; font: bold 8px/10px "Liberation Sans", sans-serif; letter-spacing: .2px; }
.wc { font: bold 5px "Open Sans", sans-serif; }
.abc { font: bold 13px Lato, sans-serif; }

.taskbar { height: 48px; flex: none; background: linear-gradient(90deg, #4a2d31, #543439 40%, #4d2f33); display: flex; align-items: center; }
.task { width: 69px; height: 46px; margin-left: 4px; display: flex; align-items: center; justify-content: center; }
.task.start { width: 60px; margin: 0; }
.task.ie { margin-left: 1px; padding-right: 2px; }
.open { background: rgba(255, 255, 255, .2); border: 1px solid rgba(255, 255, 255, .4); }
.stacked { box-shadow: inset -3px 0 0 -1px #8d7276; padding-right: 3px; }
.active { background: linear-gradient(160deg, #8d7578, #a89496); border-color: #eee; }
.adobe { width: 37px; height: 35px; border: 2px solid #86b9f4; background: #16075a; color: #8fc4ff; font: bold 18px/30px "Open Sans", sans-serif; text-align: center; letter-spacing: -.5px; }
.ai { border-color: #f5a52c; background: #3c1d04; color: #ffa928; }
.sublime { width: 36px; height: 34px; border-radius: 5px; background: linear-gradient(#777, #3c3c3c 80%); border-bottom: 4px solid #ccc; color: #f8972c; font: bold 20px/25px "Open Sans", sans-serif; text-align: center; }
.office { display: flex; align-items: center; width: 37px; height: 36px; }
.office b { width: 21px; height: 36px; color: #fff; font: bold 18px/36px "Open Sans", sans-serif; text-align: center; clip-path: polygon(0 9%, 100% 0, 100% 100%, 0 91%); }
.office svg { border: 1px solid; border-left: 0; width: 16px; }
.excel b { background: #207245; }
.excel svg { border-color: #207245; }
.ppt b { background: #d24726; }
.ppt svg { border-color: #d24726; }
.tray { margin-left: auto; display: flex; align-items: center; height: 48px; padding-right: 19px; }
.up { margin-left: 16px; }
.vol { margin-left: 19px; }
.sig { margin-left: 12px; }
.clock { width: 80px; margin-left: 21px; padding-top: 2px; display: flex; flex-direction: column; align-items: center; color: #fff; font: 14.500px/22px "Open Sans", "Noto Sans", sans-serif; letter-spacing: .02px; white-space: nowrap; }
```
FILE: charts.js
```js
const NS = 'http://www.w3.org/2000/svg';

function add(parent, tag, attrs, text) {
  const el = document.createElementNS(NS, tag);
  for (const key in attrs) el.setAttribute(key, attrs[key]);
  if (text !== undefined) el.textContent = text;
  parent.appendChild(el);
  return el;
}
function label(parent, x, y, text, anchor = 'middle', rotate = false) {
  const attrs = { x, y, class: 'chart-label', 'text-anchor': anchor };
  if (rotate) attrs.transform = `rotate(-90 ${x} ${y})`;
  return add(parent, 'text', attrs, text);
}
function line(parent, d) {
  add(parent, 'path', { d, class: 'grid-line' });
}

const RANGES = ['660-678', '679-713', '714-749', '750-779', '780+'];

/* Loan funding per credit grade, one row per Fico range. */
const bars = document.getElementById('bars');
const BASES = [222, 286, 349, 413, 476];
const HEIGHTS = [
  [0,0,0,0,0,2,0,2,2,2,3,5,6,6,8,12,14,11,11,8,11,9,11,9,10,7,9,7,7,6,6,4,3,2,2],
  [0,2,2,2,3,8,13,34,31,40,34,37,27,22,20,16,27,28,23,25,16,19,14,14,14,11,5,3,2,2,2,2,2,2,2],
  [2,8,15,44,51,33,34,45,44,45,31,28,15,12,8,2,9,7,8,6,9,3,2,2,2,2,2,2,2,2,2,0,0,0,0],
  [15,19,23,34,22,14,16,23,14,11,7,5,5,2,3,2,2,2,2,2,2,2,2,2,0,2,0,0,0,0,0,0,0,0,0],
  [12,11,9,11,9,5,7,9,3,4,2,2,2,2,2,2,2,2,2,2,2,0,2,0,0,0,0,0,0,0,0,0,0,0,0]
];
const NAME_Y = [191, 254, 318, 381, 445];
label(bars, 1141, 139, 'Fico');
label(bars, 1141, 150, 'Range');
line(bars, 'M1112 158.5H1856M1170.5 124V476M1228.5 124V476');
RANGES.forEach((range, row) => {
  const base = BASES[row];
  line(bars, `M1112 ${base + .5}H1856`);
  label(bars, 1141, NAME_Y[row] + 3, range);
  label(bars, 1187, NAME_Y[row], row % 2 ? 'Amoun...' : 'Amou...', 'middle', true);
  [['16M', 53], ['10M', 33], ['4M', 13]].forEach(([name, up]) => {
    label(bars, 1221, base - up + 4, name, 'end');
    line(bars, `M1224 ${base - up + .5}h4`);
  });
  HEIGHTS[row].forEach((h, i) => {
    if (h) add(bars, 'rect', { class: 'bar', x: Math.round(1234 + i * 17.7) + .5, y: base - h + .5, width: 14, height: h - .5 });
  });
});
for (let i = 0; i < 35; i++) {
  label(bars, 1242.5 + i * 17.7, i % 2 ? 504 : 489, 'ABCDEFG'[Math.floor(i / 5)] + (i % 5 + 1));
}
label(bars, 1542, 527, 'Credit Grade');

/* Interest rate against amount requested, one column per Fico range. */
const PURPOSES = [
  ['Car', '#1f77b4'], ['Credit Card', '#d91218'], ['Debt Consolidation', '#1ca01c'], ['Education', '#ff7f0e'],
  ['Home Improvement', '#8c4fc0'], ['House', '#bcbd22'], ['Major Purchase', '#17becf'], ['Medical', '#7f7f7f'],
  ['Moving', '#aec7e8'], ['Other', '#ff9896'], ['Renewable Energy', '#98df8a'], ['Small Business', '#ffbb78'],
  ['Vacation', '#c7bf08'], ['Wedding', '#dbdb8d']
];
const POINTS = [
  [478.8,674, 566.8,659, 570.9,646, 454,690, 540.9,654, 609,616.7, 496.1,668, 503.9,659, 462.8,659.7, 488,662, 492,646, 576,622, 448.8,673, 520.9,663],
  [742.2,741, 839.1,732, 856.9,716, 732.9,747, 816.9,722, 848,694.7, 768.8,730, 758,739, 726.3,746, 766.2,731, 761,733.7, 863.9,690.7, 708.9,760.7, 802.8,729],
  [1008.8,824, 1122,815.7, 1149,800, 1036.9,807, 1106.8,802, 1153.1,779, 1028,825, 1038.8,822, 1018.8,824.7, 1042.8,814.7, 1049.9,824, 1160.9,763, 981.8,842, 1073.9,814],
  [1269.2,864.7, 1368,866, 1405.4,854, 1291,830, 1388,848, 1406,839, 1307,866, 1331,855, 1291,870, 1311,855, 1356.2,865, 1435,812, 1273,874, 1369.1,854],
  [1527,886, 1601,886, 1649,870.9, 1505,856.1, 1658,860.9, 1700,837.9, 1572,879.9, 1589,875.4, 1590,872.6, 1606,862, 1565,885, 1694,828.9, 1547,899.8, 1611,873.7]
];
const scatter = document.getElementById('scatter');
label(scatter, 399, 576, 'Fico');
label(scatter, 399, 587, 'Range');
line(scatter, 'M366 595.5H1714M433.5 561V923.5H1714M689.500 561V923M945.500 561V923M1201.500 561V923M1457.500 561V923');
label(scatter, 382, 760, 'Avg. Interest Rate', 'middle', true);
[18, 16, 14, 12, 10, 8].forEach((rate, i) => {
  const y = Math.round(606 + i * 52.8);
  label(scatter, 424, y + 4, rate.toFixed(1) + '%', 'end');
  line(scatter, `M429 ${y + .5}h4`);
});
RANGES.forEach((range, col) => {
  const left = 433 + col * 256;
  label(scatter, left + 129, 581, range);
  label(scatter, left + 129, 986, 'Avg Amount Requested');
  ['6,000', '8,000', '10,000', '12,000', '14,000', '16,000'].forEach((name, i) => {
    const x = Math.round(left + 44 + i * 39.4);
    line(scatter, `M${x + .5} 924v5`);
    label(scatter, x + 5, 934, name, 'end', true);
  });
  PURPOSES.forEach(([, color], i) => {
    add(scatter, 'circle', { cx: POINTS[col][i * 2], cy: POINTS[col][i * 2 + 1], r: 10, fill: color, 'fill-opacity': .7, stroke: color, 'stroke-width': 1.6 });
  });
});

const legend = document.getElementById('legend');
PURPOSES.forEach(([name, color]) => {
  const item = document.createElement('li');
  const swatch = document.createElement('i');
  swatch.className = 'swatch';
  swatch.style.background = color;
  item.append(swatch, name);
  legend.append(item);
});
```
